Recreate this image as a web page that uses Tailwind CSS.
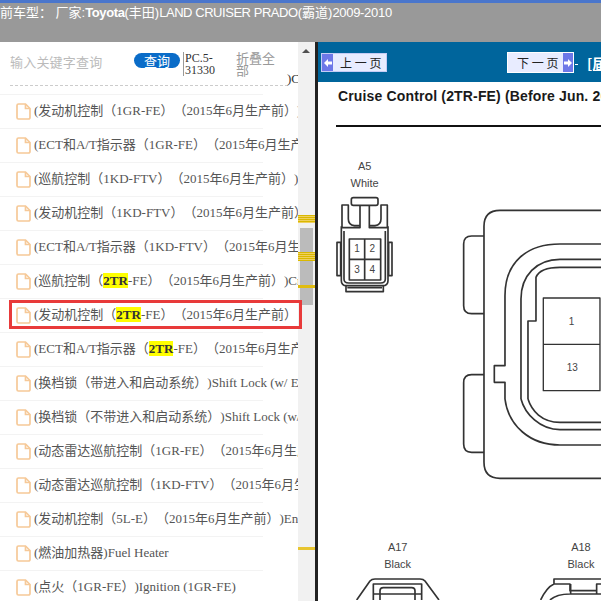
<!DOCTYPE html>
<html lang="zh-CN">
<head>
    <meta charset="UTF-8">
    <title>Cruise Control</title>
    <script src="https://cdn.jsdelivr.net/npm/@tailwindcss/browser@4"></script>
</head>
<body class="bg-white overflow-hidden">
<div class="relative w-[601px] h-[601px] overflow-hidden flex flex-col">

    <!-- Header -->
    <div class="h-[42px] shrink-0 bg-[#999999] border-t-[3px] border-[#4a76cc] text-white text-[13px] leading-[17px] whitespace-nowrap font-['Liberation_Sans','Noto_Sans_CJK_SC',sans-serif] pt-[1px]">
        <div class="ml-[-13px] [text-spacing-trim:space-all]">当前车型： 厂家:<span class="font-bold tracking-[-0.4px]">Toyota</span>(丰田)<span class="tracking-[-0.45px]">LAND CRUISER PRADO</span>(霸道)<span class="tracking-[-0.3px]">2009-2010</span></div>
    </div>

    <div class="flex flex-1 min-h-0">
        <!-- Left list -->
        <div class="w-[298px] shrink-0 overflow-hidden font-['Liberation_Serif','Noto_Sans_CJK_SC',serif] text-[13px] text-[#555555] [text-spacing-trim:space-all]">
            <div class="relative h-[53px] border-b border-[#f3f3f3] w-[263px]">
                <div class="flex items-start">
                    <span class="ml-[10px] mt-[11px] w-[124px] shrink-0 text-[#bbbbbb] leading-[18px] tracking-[0.2px] font-['Noto_Sans_CJK_SC',sans-serif]">输入关键字查询</span>
                    <button class="mt-[11px] w-[46px] h-[15px] shrink-0 bg-[#0a6cc8] rounded-full text-white text-[13px] leading-[15px] font-['Noto_Sans_CJK_SC',sans-serif]">查询</button>
                    <span class="ml-[3px] mt-[10px] w-[53px] shrink-0 border-l border-[#999999] pl-[1px] text-[12px] leading-[12px] text-[#333333]">PC.5-<br>31330</span>
                    <span class="mt-[10px] w-[40px] shrink-0 text-[#999999] leading-[12px] font-['Noto_Sans_CJK_SC',sans-serif]">折叠全部</span>
                </div>
                <div class="absolute left-[10px] top-[43px] w-[278px] border-t border-dashed border-[#cccccc]"></div>
                <span class="absolute left-[287px] top-[30px] leading-[14px] text-[#333333]">)C</span>
            </div>

            <ul>
                <li class="flex items-center h-[34px] pb-[1px] w-[263px] border-b border-[#f3f3f3] whitespace-nowrap pl-[16px]">
                    <svg class="w-[15px] h-[17px] shrink-0 mr-[3px]" viewBox="0 0 15 17" fill="none" stroke="#f6c998" stroke-width="1.7"><path d="M1 2.5a1.5 1.5 0 0 1 1.5-1.5H9.5L14 5.5V14.5a1.5 1.5 0 0 1-1.5 1.5H2.5A1.5 1.5 0 0 1 1 14.5Z"/><path d="M9.5 1V5.5H14"/></svg>
                    <span>(发动机控制（1GR-FE）（2015年6月生产前）)Engine Control</span>
                </li>
                <li class="flex items-center h-[34px] pb-[1px] w-[263px] border-b border-[#f3f3f3] whitespace-nowrap pl-[16px]">
                    <svg class="w-[15px] h-[17px] shrink-0 mr-[3px]" viewBox="0 0 15 17" fill="none" stroke="#f6c998" stroke-width="1.7"><path d="M1 2.5a1.5 1.5 0 0 1 1.5-1.5H9.5L14 5.5V14.5a1.5 1.5 0 0 1-1.5 1.5H2.5A1.5 1.5 0 0 1 1 14.5Z"/><path d="M9.5 1V5.5H14"/></svg>
                    <span>(ECT和A/T指示器（1GR-FE）（2015年6月生产前）)ECT</span>
                </li>
                <li class="flex items-center h-[34px] pb-[1px] w-[263px] border-b border-[#f3f3f3] whitespace-nowrap pl-[16px]">
                    <svg class="w-[15px] h-[17px] shrink-0 mr-[3px]" viewBox="0 0 15 17" fill="none" stroke="#f6c998" stroke-width="1.7"><path d="M1 2.5a1.5 1.5 0 0 1 1.5-1.5H9.5L14 5.5V14.5a1.5 1.5 0 0 1-1.5 1.5H2.5A1.5 1.5 0 0 1 1 14.5Z"/><path d="M9.5 1V5.5H14"/></svg>
                    <span>(巡航控制（1KD-FTV）（2015年6月生产前）)Cruise</span>
                </li>
                <li class="flex items-center h-[34px] pb-[1px] w-[263px] border-b border-[#f3f3f3] whitespace-nowrap pl-[16px]">
                    <svg class="w-[15px] h-[17px] shrink-0 mr-[3px]" viewBox="0 0 15 17" fill="none" stroke="#f6c998" stroke-width="1.7"><path d="M1 2.5a1.5 1.5 0 0 1 1.5-1.5H9.5L14 5.5V14.5a1.5 1.5 0 0 1-1.5 1.5H2.5A1.5 1.5 0 0 1 1 14.5Z"/><path d="M9.5 1V5.5H14"/></svg>
                    <span>(发动机控制（1KD-FTV）（2015年6月生产前）)Engine</span>
                </li>
                <li class="flex items-center h-[34px] pb-[1px] w-[263px] border-b border-[#f3f3f3] whitespace-nowrap pl-[16px]">
                    <svg class="w-[15px] h-[17px] shrink-0 mr-[3px]" viewBox="0 0 15 17" fill="none" stroke="#f6c998" stroke-width="1.7"><path d="M1 2.5a1.5 1.5 0 0 1 1.5-1.5H9.5L14 5.5V14.5a1.5 1.5 0 0 1-1.5 1.5H2.5A1.5 1.5 0 0 1 1 14.5Z"/><path d="M9.5 1V5.5H14"/></svg>
                    <span>(ECT和A/T指示器（1KD-FTV）（2015年6月生产前）)ECT</span>
                </li>
                <li class="flex items-center h-[34px] pb-[1px] w-[263px] border-b border-[#f3f3f3] whitespace-nowrap pl-[16px]">
                    <svg class="w-[15px] h-[17px] shrink-0 mr-[3px]" viewBox="0 0 15 17" fill="none" stroke="#f6c998" stroke-width="1.7"><path d="M1 2.5a1.5 1.5 0 0 1 1.5-1.5H9.5L14 5.5V14.5a1.5 1.5 0 0 1-1.5 1.5H2.5A1.5 1.5 0 0 1 1 14.5Z"/><path d="M9.5 1V5.5H14"/></svg>
                    <span>(巡航控制（<span class="bg-[#ffff00] font-bold text-[#333333]">2TR</span>-FE）（2015年6月生产前）)Cruise</span>
                </li>
                <li class="flex items-center h-[34px] pb-[1px] w-[263px] border-b border-[#f3f3f3] whitespace-nowrap pl-[16px]">
                    <svg class="w-[15px] h-[17px] shrink-0 mr-[3px]" viewBox="0 0 15 17" fill="none" stroke="#f6c998" stroke-width="1.7"><path d="M1 2.5a1.5 1.5 0 0 1 1.5-1.5H9.5L14 5.5V14.5a1.5 1.5 0 0 1-1.5 1.5H2.5A1.5 1.5 0 0 1 1 14.5Z"/><path d="M9.5 1V5.5H14"/></svg>
                    <span>(发动机控制（<span class="bg-[#ffff00] font-bold text-[#333333]">2TR</span>-FE）（2015年6月生产前）</span>
                </li>
                <li class="flex items-center h-[34px] pb-[1px] w-[263px] border-b border-[#f3f3f3] whitespace-nowrap pl-[16px]">
                    <svg class="w-[15px] h-[17px] shrink-0 mr-[3px]" viewBox="0 0 15 17" fill="none" stroke="#f6c998" stroke-width="1.7"><path d="M1 2.5a1.5 1.5 0 0 1 1.5-1.5H9.5L14 5.5V14.5a1.5 1.5 0 0 1-1.5 1.5H2.5A1.5 1.5 0 0 1 1 14.5Z"/><path d="M9.5 1V5.5H14"/></svg>
                    <span>(ECT和A/T指示器（<span class="bg-[#ffff00] font-bold text-[#333333]">2TR</span>-FE）（2015年6月生产前）)ECT</span>
                </li>
                <li class="flex items-center h-[34px] pb-[1px] w-[263px] border-b border-[#f3f3f3] whitespace-nowrap pl-[16px]">
                    <svg class="w-[15px] h-[17px] shrink-0 mr-[3px]" viewBox="0 0 15 17" fill="none" stroke="#f6c998" stroke-width="1.7"><path d="M1 2.5a1.5 1.5 0 0 1 1.5-1.5H9.5L14 5.5V14.5a1.5 1.5 0 0 1-1.5 1.5H2.5A1.5 1.5 0 0 1 1 14.5Z"/><path d="M9.5 1V5.5H14"/></svg>
                    <span>(换档锁（带进入和启动系统）)Shift Lock (w/ Entry)</span>
                </li>
                <li class="flex items-center h-[34px] pb-[1px] w-[263px] border-b border-[#f3f3f3] whitespace-nowrap pl-[16px]">
                    <svg class="w-[15px] h-[17px] shrink-0 mr-[3px]" viewBox="0 0 15 17" fill="none" stroke="#f6c998" stroke-width="1.7"><path d="M1 2.5a1.5 1.5 0 0 1 1.5-1.5H9.5L14 5.5V14.5a1.5 1.5 0 0 1-1.5 1.5H2.5A1.5 1.5 0 0 1 1 14.5Z"/><path d="M9.5 1V5.5H14"/></svg>
                    <span>(换档锁（不带进入和启动系统）)Shift Lock (w/o Entry)</span>
                </li>
                <li class="flex items-center h-[34px] pb-[1px] w-[263px] border-b border-[#f3f3f3] whitespace-nowrap pl-[16px]">
                    <svg class="w-[15px] h-[17px] shrink-0 mr-[3px]" viewBox="0 0 15 17" fill="none" stroke="#f6c998" stroke-width="1.7"><path d="M1 2.5a1.5 1.5 0 0 1 1.5-1.5H9.5L14 5.5V14.5a1.5 1.5 0 0 1-1.5 1.5H2.5A1.5 1.5 0 0 1 1 14.5Z"/><path d="M9.5 1V5.5H14"/></svg>
                    <span>(动态雷达巡航控制（1GR-FE）（2015年6月生产前）</span>
                </li>
                <li class="flex items-center h-[34px] pb-[1px] w-[263px] border-b border-[#f3f3f3] whitespace-nowrap pl-[16px]">
                    <svg class="w-[15px] h-[17px] shrink-0 mr-[3px]" viewBox="0 0 15 17" fill="none" stroke="#f6c998" stroke-width="1.7"><path d="M1 2.5a1.5 1.5 0 0 1 1.5-1.5H9.5L14 5.5V14.5a1.5 1.5 0 0 1-1.5 1.5H2.5A1.5 1.5 0 0 1 1 14.5Z"/><path d="M9.5 1V5.5H14"/></svg>
                    <span>(动态雷达巡航控制（1KD-FTV）（2015年6月生产前）</span>
                </li>
                <li class="flex items-center h-[34px] pb-[1px] w-[263px] border-b border-[#f3f3f3] whitespace-nowrap pl-[16px]">
                    <svg class="w-[15px] h-[17px] shrink-0 mr-[3px]" viewBox="0 0 15 17" fill="none" stroke="#f6c998" stroke-width="1.7"><path d="M1 2.5a1.5 1.5 0 0 1 1.5-1.5H9.5L14 5.5V14.5a1.5 1.5 0 0 1-1.5 1.5H2.5A1.5 1.5 0 0 1 1 14.5Z"/><path d="M9.5 1V5.5H14"/></svg>
                    <span>(发动机控制（5L-E）（2015年6月生产前）)Engine</span>
                </li>
                <li class="flex items-center h-[34px] pb-[1px] w-[263px] border-b border-[#f3f3f3] whitespace-nowrap pl-[16px]">
                    <svg class="w-[15px] h-[17px] shrink-0 mr-[3px]" viewBox="0 0 15 17" fill="none" stroke="#f6c998" stroke-width="1.7"><path d="M1 2.5a1.5 1.5 0 0 1 1.5-1.5H9.5L14 5.5V14.5a1.5 1.5 0 0 1-1.5 1.5H2.5A1.5 1.5 0 0 1 1 14.5Z"/><path d="M9.5 1V5.5H14"/></svg>
                    <span>(燃油加热器)Fuel Heater</span>
                </li>
                <li class="flex items-center h-[34px] pb-[1px] w-[263px] border-b border-[#f3f3f3] whitespace-nowrap pl-[16px]">
                    <svg class="w-[15px] h-[17px] shrink-0 mr-[3px]" viewBox="0 0 15 17" fill="none" stroke="#f6c998" stroke-width="1.7"><path d="M1 2.5a1.5 1.5 0 0 1 1.5-1.5H9.5L14 5.5V14.5a1.5 1.5 0 0 1-1.5 1.5H2.5A1.5 1.5 0 0 1 1 14.5Z"/><path d="M9.5 1V5.5H14"/></svg>
                    <span>(点火（1GR-FE）)Ignition (1GR-FE)</span>
                </li>
            </ul>
        </div>

        <!-- Scrollbar -->
        <div class="relative w-[17px] shrink-0 bg-[#f1f1f1]">
            <div class="absolute left-[4px] top-[7px] w-0 h-0 border-x-[4px] border-x-transparent border-b-[4px] border-b-[#505050]"></div>
            <div class="absolute left-[2px] top-[186px] w-[13px] h-[77px] bg-[#bbbbbb]"></div>
            <div class="absolute left-0 top-[173px] w-full h-[8px] bg-[repeating-linear-gradient(#d9b800_0,#d9b800_1px,#f0d060_1px,#f0d060_2px)]"></div>
            <div class="absolute left-0 top-[210px] w-full h-[9px] bg-[repeating-linear-gradient(#d9b800_0,#d9b800_1px,#f0d060_1px,#f0d060_2px)]"></div>
            <div class="absolute left-0 top-[243px] w-full h-[3px] bg-[#e0bc10]"></div>
            <div class="absolute left-0 top-[505px] w-full h-[3px] bg-[#e8c530]"></div>
        </div>

        <div class="w-[3px] shrink-0 bg-[#222222]"></div>

        <!-- Right document -->
        <div class="flex-1 min-w-0 overflow-hidden flex flex-col font-['Liberation_Sans',sans-serif]">
            <div class="h-[40px] shrink-0 bg-[#00659c] relative flex items-start whitespace-nowrap">
                <div class="ml-[3px] mt-[11px] w-[66px] h-[19px] shrink-0 flex items-center bg-[#e8ecff] border border-[#c5ccf5] font-['Noto_Sans_CJK_SC',sans-serif] text-[12px] text-[#222222]">
                    <span class="w-[11px] h-full shrink-0 bg-[#6d78e8] flex items-center justify-center">
                        <svg class="w-[8px] h-[8px]" viewBox="0 0 8 8" fill="#ffffff"><path d="M0 4L4 0V2.5H8V5.5H4V8Z"/></svg>
                    </span>
                    <span class="ml-[7px]">上 一 页</span>
                </div>
                <div class="ml-[120px] mt-[10px] w-[67px] h-[21px] shrink-0 flex items-center bg-[#e8ecff] border border-white font-['Noto_Sans_CJK_SC',sans-serif] text-[12px] text-[#222222]">
                    <span class="ml-[9px]">下 一 页</span>
                    <span class="ml-auto w-[10px] h-full shrink-0 bg-[#6d78e8] flex items-center justify-center">
                        <svg class="w-[8px] h-[8px]" viewBox="0 0 8 8" fill="#ffffff"><path d="M8 4L4 0V2.5H0V5.5H4V8Z"/></svg>
                    </span>
                </div>
                <span class="ml-[1px] mt-[22px] w-[3px] shrink-0 h-[1px] bg-white"></span>
                <span class="ml-[9px] mt-[12px] shrink-0 text-white text-[14px] leading-[18px] font-bold font-['Noto_Sans_CJK_SC',sans-serif] underline">[届</span>
            </div>

            <div class="h-[47px] shrink-0 pl-[18px] whitespace-nowrap">
                <div class="pl-[2px] pt-[6px] text-[14px] leading-[17px] font-bold tracking-[0.15px] text-[#1a1a1a]">Cruise Control (2TR-FE) (Before Jun. 2015)</div>
                <div class="mt-[20px] h-[2px] bg-[#111111]"></div>
            </div>

            <!-- Connector diagram, coordinates follow the page -->
            <svg class="block shrink-0" width="283" height="471" viewBox="318 130 283 471" fill="none" stroke="#333333" font-family="Liberation Sans, sans-serif">
                <g transform="translate(320 150) scale(.3333)" stroke-width="5" stroke-linejoin="round">
                    <text x="134" y="64" text-anchor="middle" font-size="33" fill="#444444" stroke="none">A5</text>
                    <text x="134" y="113" text-anchor="middle" font-size="33" fill="#444444" stroke="none">White</text>
                    <rect x="94" y="146" width="80" height="23" rx="6"/>
                    <path d="M120 169V236H66V168H85V210Q85 228 103 230H120M148 169V236H202V168H183V210Q183 228 165 230H148"/>
                    <path d="M64 232V395Q64 410 80 410H188Q204 410 204 395V232M72 246V390Q72 402 86 402H182Q196 402 196 390V246"/>
                    <path d="M64 280H51V380H64M62 280V380M204 280H216V380H204M206 280V380"/>
                    <path d="M78 410V428H190V410M82 416H186"/>
                    <rect x="88" y="270" width="94" height="123"/>
                    <path d="M134 270V393M88 331H182"/>
                    <g font-size="30" fill="#444444" stroke="none" text-anchor="middle">
                        <text x="111" y="310">1</text><text x="157" y="310">2</text>
                        <text x="111" y="372">3</text><text x="157" y="372">4</text>
                    </g>

                    <path d="M843 184H540Q492 184 492 232V750"/>
                    <path d="M492 261H455Q431 261 431 285V470Q431 494 455 494H492"/>
                    <path d="M492 677H455Q431 677 431 701V750"/>
                    <path d="M843 285H720C620 285 555 340 555 440V650H523V700H555V750"/>
                    <path d="M843 331H720C650 331 603 380 603 450V750"/>
                    <path d="M843 355H720Q660 355 648 385V516H624V750"/>
                    <rect x="670" y="447" width="170" height="278" stroke-width="4"/>
                    <path d="M670 586H840" stroke-width="4"/>
                    <g font-size="30" fill="#444444" stroke="none" text-anchor="middle">
                        <text x="755" y="527">1</text><text x="757" y="666">13</text>
                    </g>
                </g>
                <g transform="translate(320 400) scale(.3333)" stroke-width="5" stroke-linejoin="round">
                    <path d="M492 0V190Q492 238 540 238H843"/>
                    <path d="M431 0V135Q431 160 455 160H492"/>
                    <path d="M555 0C565 80 630 138 720 138H843"/>
                    <path d="M603 0C615 45 660 92 720 92H843"/>
                    <path d="M624 0C635 35 665 70 720 70H843"/>
                    <text x="233" y="456" text-anchor="middle" font-size="33" fill="#444444" stroke="none">A17</text>
                    <text x="233" y="506" text-anchor="middle" font-size="33" fill="#444444" stroke="none">Black</text>
                    <text x="783" y="456" text-anchor="middle" font-size="33" fill="#444444" stroke="none">A18</text>
                    <text x="783" y="506" text-anchor="middle" font-size="33" fill="#444444" stroke="none">Black</text>
                    <path d="M110 603L150 546Q155 540 165 540H300Q310 540 315 546L357 603"/>
                    <path d="M160 603V555H305V603M180 603V575Q180 566 190 566H275Q285 566 285 575V603M160 585H305"/>
                    <path d="M662 603Q680 565 702 555V540H843M702 555H750V575H830V555H843M690 603Q710 585 750 585H843M752 555V585M830 555V585"/>
                </g>
            </svg>
        </div>
    </div>

    <!-- Selected row marker -->
    <div class="absolute left-[9px] top-[300px] w-[293px] h-[29px] border-[3px] border-[#e83a3a] pointer-events-none"></div>
</div>
</body>
</html>
